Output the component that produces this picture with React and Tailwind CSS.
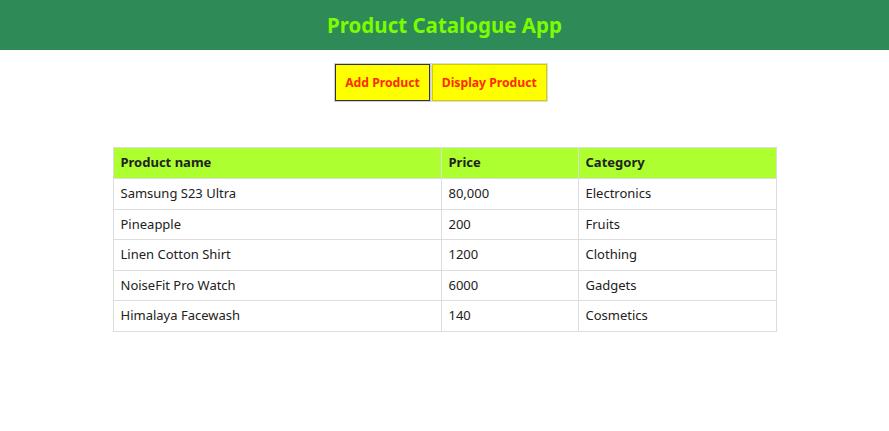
const products = [
  { name: "Samsung S23 Ultra", price: "80,000", category: "Electronics" },
  { name: "Pineapple", price: "200", category: "Fruits" },
  { name: "Linen Cotton Shirt", price: "1200", category: "Clothing" },
  { name: "NoiseFit Pro Watch", price: "6000", category: "Gadgets" },
  { name: "Himalaya Facewash", price: "140", category: "Cosmetics" },
];

export default function App() {
  return (
    <div className="min-h-screen bg-white font-['Noto_Sans',sans-serif] text-[#222]">
      <header className="h-[50px] bg-[#2e8b57] flex items-center justify-center">
        <h1 className="text-[20.5px] font-bold text-[#7cfc00] leading-none">Product Catalogue App</h1>
      </header>

      <div className="flex justify-center gap-[2px] mt-[14px] pr-[7px]">
        <button className="h-[37px] px-[9px] pt-[2px] bg-[#ffff00] text-[#ff2a00] text-[12.2px] font-bold border border-[#333] outline outline-1 outline-[#cfcfcf]">
          Add Product
        </button>
        <button className="h-[37px] px-[9px] pt-[2px] bg-[#ffff00] text-[#ff2a00] text-[12.2px] font-bold border border-[#d0d000] outline outline-1 outline-[#dddddd]">
          Display Product
        </button>
      </div>

      <table className="mt-[46px] mx-auto w-[664px] border-collapse text-[13px]">
        <thead>
          <tr className="bg-[#adff2f] h-[31px]">
            <th className="w-[328px] border border-[#ddd] px-[7px] text-left font-bold">Product name</th>
            <th className="w-[137px] border border-[#ddd] px-[7px] text-left font-bold">Price</th>
            <th className="border border-[#ddd] px-[7px] text-left font-bold">Category</th>
          </tr>
        </thead>
        <tbody>
          {products.map((p, i) => (
            <tr key={i} className="h-[30.6px]">
              <td className="border border-[#ddd] px-[7px]">{p.name}</td>
              <td className="border border-[#ddd] px-[7px]">{p.price}</td>
              <td className="border border-[#ddd] px-[7px]">{p.category}</td>
            </tr>
          ))}
        </tbody>
      </table>
    </div>
  );
}
